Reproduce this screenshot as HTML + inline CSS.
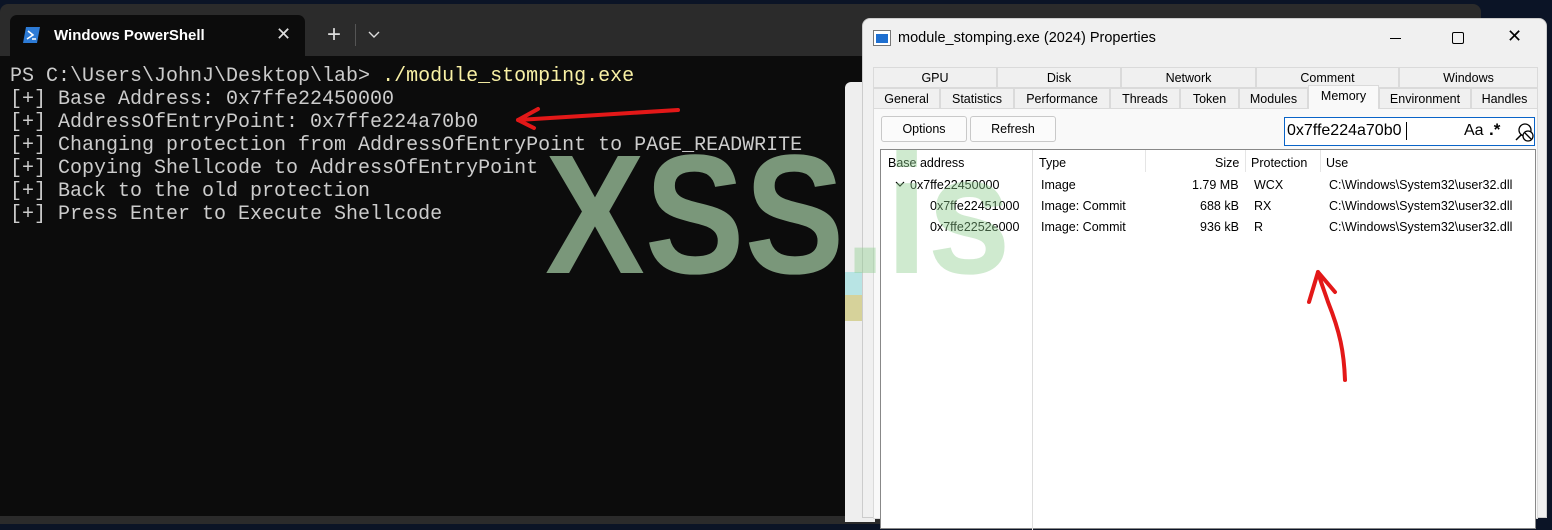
<!DOCTYPE html>
<html><head><style>
*{margin:0;padding:0;box-sizing:border-box}
body{width:1552px;height:512px;overflow:hidden;background:#0b1426;position:relative;font-family:"Liberation Sans",sans-serif}
.abs{position:absolute}
#term{left:0;top:4px;width:1481px;height:520px;background:#2b2b2b;border-radius:8px 8px 0 0}
#tab{left:10px;top:15px;width:295px;height:42px;background:#0c0c0c;border-radius:7px 7px 0 0;color:#fff;font-size:15px;font-weight:bold}
#tbody{left:0;top:56px;width:1481px;height:460px;background:#0c0c0c}
.mono{font-family:"Liberation Mono",monospace;font-size:20px;color:#cccccc;line-height:23px;white-space:pre}
.wm{font-size:170px;font-weight:bold;line-height:1;font-family:"Liberation Sans",sans-serif;white-space:nowrap;transform:scaleX(0.88);transform-origin:0 0}
#behind{left:845px;top:82px;width:30px;height:440px;background:#eeeeee;border-radius:6px 0 0 0}
#props{left:862px;top:18px;width:685px;height:500px;background:#f0f0f0;border-radius:8px 8px 0 0;border:1px solid #ccc;font-size:13px;color:#000}
.tb{position:absolute;height:21px;border:1px solid #dadada;background:#f0f0f0;text-align:center;line-height:20px;font-size:12.5px}
.btn{position:absolute;top:115px;height:26px;border:1px solid #c9c9c9;background:#fbfbfb;border-radius:3px;text-align:center;line-height:25px;font-size:12.5px}
.c{position:absolute;font-size:12.5px;white-space:nowrap}
</style></head><body>
<div id="term" class="abs"></div>
<div id="tab" class="abs">
 <svg class="abs" style="left:13px;top:11px" width="18" height="18" viewBox="0 0 18 18"><path d="M3 1h14l-3 16H0z" fill="#2d7bd6"/><path d="M5 5l5 4-6 4" stroke="#fff" stroke-width="1.6" fill="none"/><path d="M9 13h4" stroke="#fff" stroke-width="1.5"/></svg>
 <span class="abs" style="left:44px;top:12px">Windows PowerShell</span>
 <span class="abs" style="left:266px;top:9px;font-weight:normal;font-size:18px;color:#ddd">✕</span>
</div>
<div class="abs" style="left:327px;top:21px;color:#ddd;font-size:24px">+</div>
<div class="abs" style="left:355px;top:24px;width:1px;height:22px;background:#555"></div>
<svg class="abs" style="left:368px;top:31px" width="12" height="8"><path d="M1 1l5 5 5-5" stroke="#ddd" stroke-width="1.4" fill="none"/></svg>
<div id="tbody" class="abs"></div>
<div class="abs mono" style="left:10px;top:65px">PS C:\Users\JohnJ\Desktop\lab> <span style="color:#f9f1a5">./module_stomping.exe</span>
[+] Base Address: 0x7ffe22450000
[+] AddressOfEntryPoint: 0x7ffe224a70b0
[+] Changing protection from AddressOfEntryPoint to PAGE_READWRITE
[+] Copying Shellcode to AddressOfEntryPoint
[+] Back to the old protection
[+] Press Enter to Execute Shellcode</div>
<div class="abs wm" style="left:545px;top:130px;color:#7a977a">XSS.is</div>
<div id="behind" class="abs">
 <div class="abs" style="left:0;top:190px;width:30px;height:23px;background:#b8e4e4"></div>
 <div class="abs" style="left:0;top:213px;width:30px;height:26px;background:#d6d29a"></div>
</div>
<svg class="abs" style="left:498px;top:100px" width="190" height="32"><path d="M180 10 C140 12 90 16 20 20 M20 20 L40 9 M20 20 L36 28" stroke="#e31818" stroke-width="4" fill="none" stroke-linecap="round"/></svg>
<div id="props" class="abs">
 <svg class="abs" style="left:10px;top:11px" width="18" height="16"><rect x="0.5" y="0.5" width="17" height="15" fill="#fff" stroke="#777"/><rect x="3" y="4" width="12" height="9" fill="#1e6fd0"/></svg>
 <span class="abs" style="left:35px;top:11px;font-size:14.5px">module_stomping.exe (2024) Properties</span>
 <div class="abs" style="left:527px;top:19px;width:11px;height:1px;background:#000"></div>
 <div class="abs" style="left:589px;top:13px;width:12px;height:12px;border:1px solid #000;border-radius:2px"></div>
 <span class="abs" style="left:644px;top:7px;font-size:18px">✕</span>
 <div class="tb" style="left:10px;top:48px;width:124px">GPU</div>
 <div class="tb" style="left:134px;top:48px;width:124px">Disk</div>
 <div class="tb" style="left:258px;top:48px;width:135px">Network</div>
 <div class="tb" style="left:393px;top:48px;width:143px">Comment</div>
 <div class="tb" style="left:536px;top:48px;width:139px">Windows</div>
 <div class="tb" style="left:10px;top:69px;width:67px">General</div>
 <div class="tb" style="left:77px;top:69px;width:74px">Statistics</div>
 <div class="tb" style="left:151px;top:69px;width:96px">Performance</div>
 <div class="tb" style="left:247px;top:69px;width:70px">Threads</div>
 <div class="tb" style="left:317px;top:69px;width:59px">Token</div>
 <div class="tb" style="left:376px;top:69px;width:69px">Modules</div>
 <div class="tb" style="left:445px;top:66px;width:71px;height:25px;background:#f9f9f9;border-bottom:none;line-height:21px">Memory</div>
 <div class="tb" style="left:516px;top:69px;width:92px">Environment</div>
 <div class="tb" style="left:608px;top:69px;width:67px">Handles</div>
 <div class="abs" style="left:10px;top:90px;width:665px;height:410px;background:#f9f9f9;border:1px solid #dadada;border-top:none"></div>
 <div class="btn" style="left:18px;top:97px;width:86px">Options</div>
 <div class="btn" style="left:107px;top:97px;width:86px">Refresh</div>
 <div class="abs" style="left:421px;top:98px;width:251px;height:29px;border:1px solid #0a64c8;background:#fff">
  <span class="abs" style="left:2px;top:4px;font-size:16px">0x7ffe224a70b0</span>
  <div class="abs" style="left:121px;top:4px;width:1px;height:18px;background:#000"></div>
  <span class="abs" style="left:179px;top:4px;font-size:16px">Aa</span>
  <span class="abs" style="left:204px;top:2px;font-size:17px;font-weight:bold">.*</span>
  <svg class="abs" style="left:228px;top:3px" width="22" height="22"><circle cx="12" cy="9" r="6" fill="none" stroke="#000" stroke-width="1.3"/><path d="M8 14l-5 5" stroke="#000" stroke-width="1.5"/><circle cx="15" cy="15" r="5" fill="#fff" stroke="#000" stroke-width="1.3"/><path d="M12 12l6 6" stroke="#000" stroke-width="1.3"/></svg>
 </div>
 <div class="abs" style="left:17px;top:130px;width:656px;height:380px;background:#fff;border:1px solid #888"></div>
 <div class="abs" style="left:169px;top:131px;width:1px;height:380px;background:#ddd"></div>
 <div class="abs" style="left:282px;top:131px;width:1px;height:22px;background:#e5e5e5"></div>
 <div class="abs" style="left:382px;top:131px;width:1px;height:22px;background:#e5e5e5"></div>
 <div class="abs" style="left:457px;top:131px;width:1px;height:22px;background:#e5e5e5"></div>
 <span class="c" style="left:25px;top:137px">Base address</span>
 <span class="c" style="left:176px;top:137px">Type</span>
 <span class="c" style="left:352px;top:137px">Size</span>
 <span class="c" style="left:388px;top:137px">Protection</span>
 <span class="c" style="left:463px;top:137px">Use</span>
 <svg class="abs" style="left:32px;top:162px" width="10" height="8"><path d="M1 1l4 4 4-4" stroke="#000" stroke-width="1.2" fill="none"/></svg>
 <span class="c" style="left:47px;top:159px">0x7ffe22450000</span>
 <span class="c" style="left:67px;top:180px">0x7ffe22451000</span>
 <span class="c" style="left:67px;top:201px">0x7ffe2252e000</span>
 <span class="c" style="left:178px;top:159px">Image</span>
 <span class="c" style="left:178px;top:180px">Image: Commit</span>
 <span class="c" style="left:178px;top:201px">Image: Commit</span>
 <span class="c" style="left:329px;top:159px">1.79 MB</span>
 <span class="c" style="left:337px;top:180px">688 kB</span>
 <span class="c" style="left:337px;top:201px">936 kB</span>
 <span class="c" style="left:391px;top:159px">WCX</span>
 <span class="c" style="left:391px;top:180px">RX</span>
 <span class="c" style="left:391px;top:201px">R</span>
 <span class="c" style="left:466px;top:159px">C:\Windows\System32\user32.dll</span>
 <span class="c" style="left:466px;top:180px">C:\Windows\System32\user32.dll</span>
 <span class="c" style="left:466px;top:201px">C:\Windows\System32\user32.dll</span>
</div>
<div class="abs" style="left:845px;top:100px;width:200px;height:200px;overflow:hidden">
 <div class="abs wm" style="left:-300px;top:30px;color:rgba(140,205,140,0.42)">XSS.is</div>
</div>
<svg class="abs" style="left:1300px;top:262px" width="60" height="125"><path d="M45 118 C44 90 40 70 28 40 C24 28 20 18 18 10 M18 10 L9 40 M18 10 L35 30" stroke="#e31818" stroke-width="4" fill="none" stroke-linecap="round"/></svg>
</body></html>
